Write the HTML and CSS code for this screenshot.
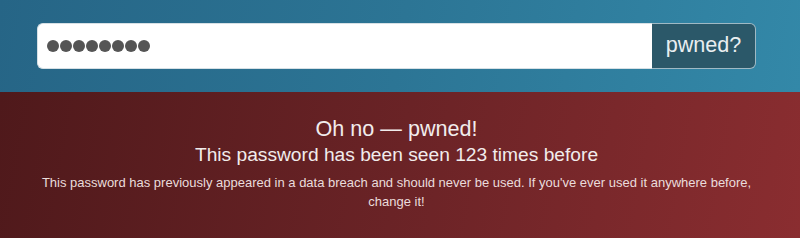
FILE: index.html
```html
<!DOCTYPE html>
<html lang="en">
<head>
<meta charset="utf-8">
<title>Pwned Passwords</title>
<link rel="stylesheet" href="styles.css">
</head>
<body>
<header class="search">
  <form class="search-form">
    <div class="pw-field" role="textbox" aria-label="Password">
      <span class="dot"></span><span class="dot"></span><span class="dot"></span><span class="dot"></span><span class="dot"></span><span class="dot"></span><span class="dot"></span><span class="dot"></span>
    </div>
    <button type="button" class="pw-button">pwned?</button>
  </form>
</header>
<section class="result">
  <div class="result-inner">
    <h2 class="title">Oh no — pwned!</h2>
    <h3 class="subtitle">This password has been seen 123 times before</h3>
    <p class="note">This password has previously appeared in a data breach and should never be used. If you've ever used it anywhere before, change it!</p>
  </div>
</section>
</body>
</html>
```

FILE: styles.css
```css
html, body {
  margin: 0;
  padding: 0;
}
body {
  width: 800px;
  height: 238px;
  overflow: hidden;
  font-family: "Liberation Sans", Arial, sans-serif;
}
.search {
  height: 92px;
  box-sizing: border-box;
  padding: 23px 44px 0 37px;
  background: linear-gradient(100deg, #266586 0%, #2c7595 50%, #3388a8 100%);
}
.search-form {
  display: flex;
  height: 46px;
  margin: 0;
}
.pw-field {
  flex: 1;
  display: flex;
  align-items: center;
  padding-left: 9px;
  background: #fff;
  border: 1px solid #d6e0e5;
  border-right: none;
  border-radius: 6px 0 0 6px;
}
.dot {
  width: 12px;
  height: 12px;
  border-radius: 50%;
  background: #555;
  margin-right: 1px;
}
.pw-button {
  width: 104px;
  box-sizing: border-box;
  margin: 0;
  padding: 0 0 2px 0;
  background: #2b5869;
  color: #e9eef0;
  border: 1px solid #9fb9c4;
  border-left: none;
  border-radius: 0 6px 6px 0;
  font-family: "Liberation Sans", Arial, sans-serif;
  font-size: 21.6px;
}
.result {
  height: 146px;
  box-sizing: border-box;
  padding: 24px 44px 0 37px;
  background: linear-gradient(100deg, #4f191b 0%, #6a2326 50%, #8a2d30 100%);
  color: #f1ecec;
  text-align: center;
}
.title {
  margin: 0;
  font-size: 21.6px;
  line-height: 26px;
  font-weight: normal;
}
.subtitle {
  margin: 0;
  font-size: 19.2px;
  line-height: 26px;
  font-weight: normal;
}
.note {
  margin: 6px 0 0 0;
  font-size: 13px;
  line-height: 18.7px;
  color: #eadcdc;
}
```
